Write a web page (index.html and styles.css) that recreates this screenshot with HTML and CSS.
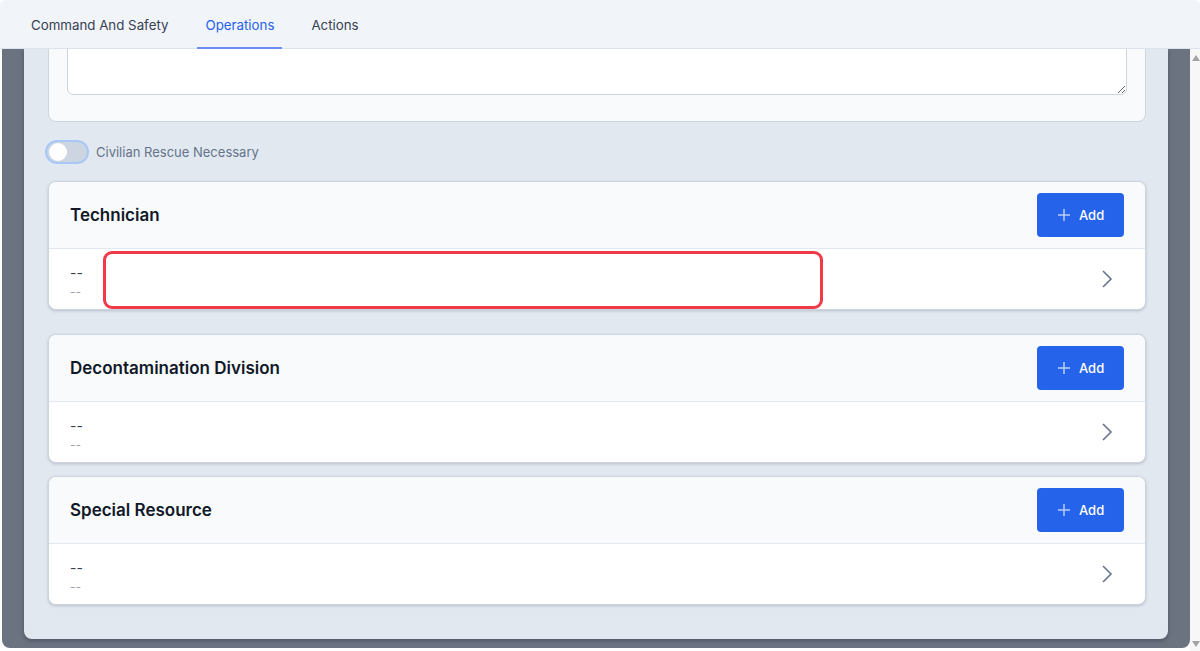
FILE: index.html
```html
<!DOCTYPE html>
<html lang="en">
<head>
    <meta charset="UTF-8">
    <meta name="viewport" content="width=device-width, initial-scale=1.0">
    <title>Operations</title>
    <link rel="stylesheet" href="styles.css">
</head>
<body>
    <nav class="tabs">
        <a class="tab">Command And Safety</a>
        <a class="tab active">Operations</a>
        <a class="tab">Actions</a>
    </nav>

    <div class="stage">
        <div class="backdrop">
            <div class="panel">
                <!-- Notas -->
                <div class="notes-card">
                    <textarea class="notes"></textarea>
                </div>

                <label class="switch-row">
                    <span class="switch"><span class="knob"></span></span>
                    <span class="switch-label">Civilian Rescue Necessary</span>
                </label>

                <!-- Secciones de recursos -->
                <section class="card">
                    <div class="card-head">
                        <h3>Technician</h3>
                        <button class="add-btn"><svg viewBox="0 0 12 12" width="12" height="12"><path d="M6 0v12M0 6h12" /></svg>Add</button>
                    </div>
                    <div class="card-row">
                        <div class="row-text">
                            <span class="main">--</span>
                            <span class="sub">--</span>
                        </div>
                        <svg class="chevron" viewBox="0 0 24 24" width="24" height="24"><path d="M8 4l8 8-8 8" /></svg>
                        <div class="highlight"></div>
                    </div>
                </section>

                <section class="card card-gap-lg">
                    <div class="card-head">
                        <h3>Decontamination Division</h3>
                        <button class="add-btn"><svg viewBox="0 0 12 12" width="12" height="12"><path d="M6 0v12M0 6h12" /></svg>Add</button>
                    </div>
                    <div class="card-row">
                        <div class="row-text">
                            <span class="main">--</span>
                            <span class="sub">--</span>
                        </div>
                        <svg class="chevron" viewBox="0 0 24 24" width="24" height="24"><path d="M8 4l8 8-8 8" /></svg>
                    </div>
                </section>

                <section class="card card-gap-sm">
                    <div class="card-head">
                        <h3>Special Resource</h3>
                        <button class="add-btn"><svg viewBox="0 0 12 12" width="12" height="12"><path d="M6 0v12M0 6h12" /></svg>Add</button>
                    </div>
                    <div class="card-row">
                        <div class="row-text">
                            <span class="main">--</span>
                            <span class="sub">--</span>
                        </div>
                        <svg class="chevron" viewBox="0 0 24 24" width="24" height="24"><path d="M8 4l8 8-8 8" /></svg>
                    </div>
                </section>
            </div>
        </div>

        <div class="scrollbar">
            <span class="arrow up"></span>
            <span class="arrow down"></span>
        </div>
    </div>
</body>
</html>
```

FILE: styles.css
```css
/* General */
body {
    font-family: Inter, "Noto Sans", sans-serif;
    background: #fff;
    color: #374151;
    margin: 0;
    padding: 0;
    height: 651px;
    overflow: hidden;
}

/* Pestañas */
.tabs {
    display: flex;
    gap: 21px;
    height: 49px;
    padding-left: 23px;
    background: #f1f4f9;
    border-bottom: 1px solid #dde3ec;
    border-radius: 6px 6px 0 0;
    box-sizing: border-box;
}

.tab {
    display: flex;
    align-items: center;
    padding: 2px 8px 0;
    font-size: 13.3px;
    color: #374151;
    border-bottom: 2px solid transparent;
    margin-bottom: -1px;
}

.tab.active {
    color: #2563eb;
    border-bottom-color: #6b8ff0;
}

/* Zona de contenido */
.stage {
    display: flex;
    height: 602px;
}

.backdrop {
    flex: 1;
    margin: 0 0 3px 2px;
    background: #6b7280;
    border-radius: 0 0 8px 8px;
    overflow: hidden;
}

.panel {
    margin: 0 22px 10px 22px;
    padding: 0 22px 34px 24px;
    background: #e2e8f0;
    border-radius: 0 0 8px 8px;
    box-shadow: 0 2px 4px rgba(30, 41, 59, 0.35);
    overflow: hidden;
}

.notes-card {
    margin-top: -30px;
    padding: 18px 18px 26px;
    background: #f8fafc;
    border: 1px solid #cdd5e1;
    border-radius: 8px;
}

.notes {
    display: block;
    width: 100%;
    height: 57px;
    box-sizing: border-box;
    border: 1px solid #cdd5e1;
    border-radius: 6px;
    background: #fff;
}

/* Interruptor */
.switch-row {
    display: flex;
    align-items: center;
    gap: 9px;
    margin: 19px 0 0 -1px;
    height: 22px;
}

.switch {
    position: relative;
    width: 40px;
    height: 20px;
    background: #cdd5e1;
    border-radius: 10px;
    box-shadow: 0 0 0 2px #a9c8f7;
}

.knob {
    position: absolute;
    top: 1px;
    left: 2px;
    width: 18px;
    height: 18px;
    border-radius: 50%;
    background: #fff;
}

.switch-label {
    font-size: 13px;
    color: #64748b;
}

/* Tarjetas */
.card {
    margin-top: 18px;
    background: #fff;
    border: 1px solid #cdd5e1;
    border-radius: 8px;
    box-shadow: 0 1px 3px rgba(30, 41, 59, 0.22);
    overflow: hidden;
}

.card-gap-lg {
    margin-top: 24px;
}

.card-gap-sm {
    margin-top: 13px;
}

.card-head {
    display: flex;
    align-items: center;
    justify-content: space-between;
    height: 67px;
    padding: 0 21px 1px 21px;
    background: #f8fafc;
    border-bottom: 1px solid #e2e8f0;
    box-sizing: border-box;
}

.card-head h3 {
    margin: 0;
    font-size: 17px;
    font-weight: 600;
    color: #111827;
}

.add-btn {
    display: flex;
    align-items: center;
    gap: 9px;
    width: 87px;
    height: 44px;
    padding: 0 0 0 21px;
    background: #2563eb;
    color: #fff;
    border: none;
    border-radius: 4px;
    font-family: inherit;
    font-size: 13px;
    font-weight: 500;
}

.add-btn svg {
    stroke: #b9cdf8;
    stroke-width: 1.5;
}

.card-row {
    position: relative;
    display: flex;
    align-items: center;
    justify-content: space-between;
    height: 60px;
    padding: 0 26px 0 21px;
}

.row-text {
    display: flex;
    flex-direction: column;
    gap: 3px;
    padding-top: 5px;
}

.row-text .main {
    font-size: 14px;
    color: #374151;
    line-height: 17px;
}

.row-text .sub {
    font-size: 12px;
    color: #9ca3af;
    line-height: 15px;
}

.chevron {
    fill: none;
    stroke: #64748b;
    stroke-width: 1.6;
}

/* Recuadro resaltado */
.highlight {
    position: absolute;
    left: 54px;
    top: 2px;
    width: 720px;
    height: 58px;
    box-sizing: border-box;
    border: 3px solid #f03a47;
    border-radius: 9px;
}

/* Barra de desplazamiento */
.scrollbar {
    position: relative;
    width: 10px;
    background: #f7f7f7;
}

.arrow {
    position: absolute;
    left: 2px;
    width: 0;
    height: 0;
    border-left: 4px solid transparent;
    border-right: 4px solid transparent;
}

.arrow.up {
    top: 6px;
    border-bottom: 6px solid #a3a3a3;
}

.arrow.down {
    bottom: 4px;
    border-top: 6px solid #a3a3a3;
}
```
